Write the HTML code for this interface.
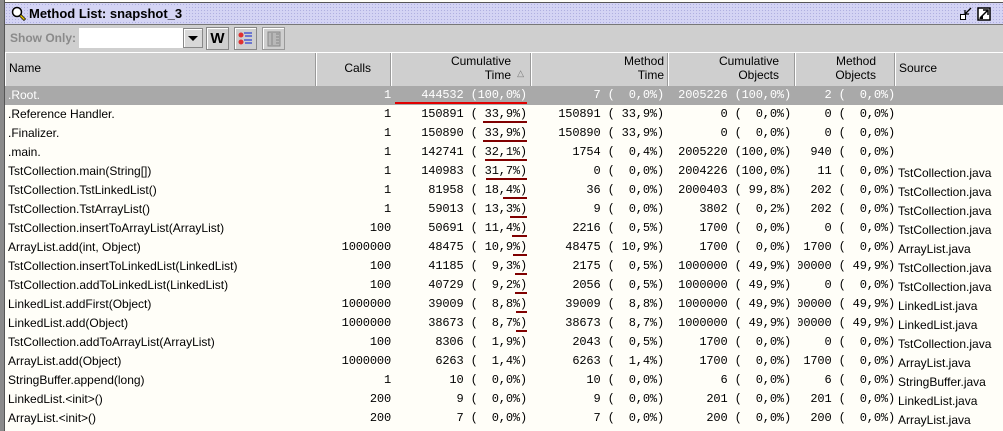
<!DOCTYPE html>
<html><head><meta charset="utf-8"><style>
*{margin:0;padding:0;box-sizing:border-box}
body{width:1003px;height:431px;overflow:hidden;background:#fffef8;font-family:"Liberation Sans",sans-serif;font-size:12px;position:relative}
.lb{position:absolute;left:0;top:0;width:5px;height:431px;background:#8a8a8a;border-right:1px solid #555}
.title{position:absolute;left:5px;top:2px;width:998px;height:23px;background-color:#d4d4f4;background-image:radial-gradient(#b0b0e0 0.6px,transparent 0.8px);background-size:3px 3px;border-top:1px solid #555;border-bottom:1px solid #777}
.title b{position:absolute;left:24px;top:3px;font-size:13px;background:#d4d4f4;padding-right:4px;color:#000}
.tb{position:absolute;left:5px;top:25px;width:998px;height:27px;background:#cfcfcf}
.hdr{position:absolute;left:5px;top:52px;width:998px;height:34px;background:#cfcfcf;border-top:1px solid #fff}
.hc{position:absolute;top:0;height:33px;border-right:1px solid #9a9a9a;border-left:1px solid #fff;font-size:12px;color:#000;line-height:14px}
.row{position:absolute;left:5px;width:998px;height:19px}
.row.sel{background:#a9a9a9;color:#fff}
.nm{position:absolute;left:3px;top:2px;white-space:nowrap}
.m{position:absolute;top:2px;font-family:"Liberation Mono",monospace;font-size:12px;letter-spacing:-0.15px;white-space:pre;text-align:right}
.ul{position:absolute;height:2px;background:#800000;top:16px}
.clip{position:absolute;left:793px;width:97px;height:19px;overflow:hidden}
</style></head><body>
<div class="lb"></div>
<div class="title">
<svg style="position:absolute;left:6px;top:3px" width="16" height="16" viewBox="0 0 16 16"><circle cx="6" cy="6" r="4.5" fill="#fff" stroke="#000" stroke-width="1.5"/><path d="M9 9l5 5" stroke="#000" stroke-width="3"/><path d="M9.5 9.5l4 4" stroke="#e8c800" stroke-width="1.5"/></svg>
<b>Method List: snapshot_3</b>
<svg style="position:absolute;left:954px;top:3px" width="40" height="16" viewBox="0 0 40 16"><rect x="1.5" y="8.5" width="5" height="5" fill="#fff" stroke="#000"/><path d="M6 8l6-6M6 4v4h4" stroke="#000" fill="none" stroke-width="1.3"/><rect x="19" y="2" width="12" height="12" fill="#fff" stroke="#000" stroke-width="1.5"/><path d="M21 12l8-8M24 4h5v5" stroke="#000" fill="none" stroke-width="1.5"/><path d="M20 13l4 0 0-4z" fill="#000"/></svg>
</div>
<div class="tb">
<span style="position:absolute;left:5px;top:6px;font-weight:bold;color:#8a8a8a;font-size:12px">Show Only:</span>
<div style="position:absolute;left:74px;top:3px;width:109px;height:20px;background:#fff"></div>
<div style="position:absolute;left:178px;top:3px;width:20px;height:20px;border:1px solid #888;background:#d8d8d8;box-shadow:inset 1px 1px #fff"><svg width="18" height="18"><path d="M4 7h10l-5 5z" fill="#000"/></svg></div>
<div style="position:absolute;left:201px;top:2px;width:23px;height:23px;border:1px solid #888;box-shadow:inset 1px 1px #fff;font-weight:bold;font-size:15px;text-align:center;line-height:21px">W</div>
<div style="position:absolute;left:229px;top:2px;width:23px;height:23px;border:1px solid #888;box-shadow:inset 1px 1px #fff"><svg width="22" height="22"><circle cx="6" cy="7" r="2.5" fill="#e03030"/><circle cx="6" cy="14" r="2.5" fill="#e03030"/><path d="M9 5h8M10 8h7M9 12h8M10 15h7" stroke="#3040d0" stroke-width="1.2"/></svg></div>
<div style="position:absolute;left:257px;top:2px;width:23px;height:23px;border:1px solid #999;box-shadow:inset 1px 1px #fff"><svg width="22" height="22"><rect x="5" y="4" width="12" height="14" fill="#b8b8b8" stroke="#888"/><path d="M9 5v12M13 6h3M13 9h3M13 12h3M13 15h3" stroke="#888"/></svg></div>
</div>
<div class="hdr">
<div class="hc" style="left:0;width:311px"><span style="position:absolute;left:3px;top:8px">Name</span></div>
<div class="hc" style="left:311px;width:75px"><span style="position:absolute;right:19px;top:8px">Calls</span></div>
<div class="hc" style="left:386px;width:140px;text-align:right;padding:1px 19px 0 0">Cumulative<br>Time<span style="position:absolute;right:6px;top:13px;font-size:9px;color:#777">△</span></div>
<div class="hc" style="left:526px;width:137px;text-align:right;padding:1px 3px 0 0">Method<br>Time</div>
<div class="hc" style="left:663px;width:127px;text-align:right;padding:1px 15px 0 0">Cumulative<br>Objects</div>
<div class="hc" style="left:790px;width:100px;text-align:right;padding:1px 18px 0 0">Method<br>Objects</div>
<div class="hc" style="left:890px;width:108px;border-right:none"><span style="position:absolute;left:3px;top:8px">Source</span></div>
</div>
<div class="row sel" style="top:86px"><span class="nm">.Root.</span><span class="m" style="right:612px">1</span><div class="ul" style="left:390px;width:132px;background:#e00000"></div><span class="m" style="right:476px">444532 (100,0%)</span><span class="m" style="right:339px">7 (  0,0%)</span><span class="m" style="right:212px">2005226 (100,0%)</span><div class="clip" style="top:0"><span class="m" style="right:0">2 (  0,0%)</span></div></div>
<div class="row" style="top:105px"><span class="nm">.Reference Handler.</span><span class="m" style="right:612px">1</span><div class="ul" style="left:478px;width:44px"></div><span class="m" style="right:476px">150891 ( 33,9%)</span><span class="m" style="right:339px">150891 ( 33,9%)</span><span class="m" style="right:212px">0 (  0,0%)</span><div class="clip"><span class="m" style="right:0">0 (  0,0%)</span></div></div>
<div class="row" style="top:124px"><span class="nm">.Finalizer.</span><span class="m" style="right:612px">1</span><div class="ul" style="left:478px;width:44px"></div><span class="m" style="right:476px">150890 ( 33,9%)</span><span class="m" style="right:339px">150890 ( 33,9%)</span><span class="m" style="right:212px">0 (  0,0%)</span><div class="clip"><span class="m" style="right:0">0 (  0,0%)</span></div></div>
<div class="row" style="top:143px"><span class="nm">.main.</span><span class="m" style="right:612px">1</span><div class="ul" style="left:480px;width:42px"></div><span class="m" style="right:476px">142741 ( 32,1%)</span><span class="m" style="right:339px">1754 (  0,4%)</span><span class="m" style="right:212px">2005220 (100,0%)</span><div class="clip"><span class="m" style="right:0">940 (  0,0%)</span></div></div>
<div class="row" style="top:162px"><span class="nm">TstCollection.main(String[])</span><span class="m" style="right:612px">1</span><div class="ul" style="left:481px;width:41px"></div><span class="m" style="right:476px">140983 ( 31,7%)</span><span class="m" style="right:339px">0 (  0,0%)</span><span class="m" style="right:212px">2004226 (100,0%)</span><div class="clip"><span class="m" style="right:0">11 (  0,0%)</span></div></div>
<div class="row" style="top:181px"><span class="nm">TstCollection.TstLinkedList()</span><span class="m" style="right:612px">1</span><div class="ul" style="left:498px;width:24px"></div><span class="m" style="right:476px">81958 ( 18,4%)</span><span class="m" style="right:339px">36 (  0,0%)</span><span class="m" style="right:212px">2000403 ( 99,8%)</span><div class="clip"><span class="m" style="right:0">202 (  0,0%)</span></div></div>
<div class="row" style="top:200px"><span class="nm">TstCollection.TstArrayList()</span><span class="m" style="right:612px">1</span><div class="ul" style="left:505px;width:17px"></div><span class="m" style="right:476px">59013 ( 13,3%)</span><span class="m" style="right:339px">9 (  0,0%)</span><span class="m" style="right:212px">3802 (  0,2%)</span><div class="clip"><span class="m" style="right:0">202 (  0,0%)</span></div></div>
<div class="row" style="top:219px"><span class="nm">TstCollection.insertToArrayList(ArrayList)</span><span class="m" style="right:612px">100</span><div class="ul" style="left:507px;width:15px"></div><span class="m" style="right:476px">50691 ( 11,4%)</span><span class="m" style="right:339px">2216 (  0,5%)</span><span class="m" style="right:212px">1700 (  0,0%)</span><div class="clip"><span class="m" style="right:0">0 (  0,0%)</span></div></div>
<div class="row" style="top:238px"><span class="nm">ArrayList.add(int, Object)</span><span class="m" style="right:612px">1000000</span><div class="ul" style="left:508px;width:14px"></div><span class="m" style="right:476px">48475 ( 10,9%)</span><span class="m" style="right:339px">48475 ( 10,9%)</span><span class="m" style="right:212px">1700 (  0,0%)</span><div class="clip"><span class="m" style="right:0">1700 (  0,0%)</span></div></div>
<div class="row" style="top:257px"><span class="nm">TstCollection.insertToLinkedList(LinkedList)</span><span class="m" style="right:612px">100</span><div class="ul" style="left:510px;width:12px"></div><span class="m" style="right:476px">41185 (  9,3%)</span><span class="m" style="right:339px">2175 (  0,5%)</span><span class="m" style="right:212px">1000000 ( 49,9%)</span><div class="clip"><span class="m" style="right:0">1000000 ( 49,9%)</span></div></div>
<div class="row" style="top:276px"><span class="nm">TstCollection.addToLinkedList(LinkedList)</span><span class="m" style="right:612px">100</span><div class="ul" style="left:510px;width:12px"></div><span class="m" style="right:476px">40729 (  9,2%)</span><span class="m" style="right:339px">2056 (  0,5%)</span><span class="m" style="right:212px">1000000 ( 49,9%)</span><div class="clip"><span class="m" style="right:0">0 (  0,0%)</span></div></div>
<div class="row" style="top:295px"><span class="nm">LinkedList.addFirst(Object)</span><span class="m" style="right:612px">1000000</span><div class="ul" style="left:511px;width:11px"></div><span class="m" style="right:476px">39009 (  8,8%)</span><span class="m" style="right:339px">39009 (  8,8%)</span><span class="m" style="right:212px">1000000 ( 49,9%)</span><div class="clip"><span class="m" style="right:0">1000000 ( 49,9%)</span></div></div>
<div class="row" style="top:314px"><span class="nm">LinkedList.add(Object)</span><span class="m" style="right:612px">1000000</span><div class="ul" style="left:511px;width:11px"></div><span class="m" style="right:476px">38673 (  8,7%)</span><span class="m" style="right:339px">38673 (  8,7%)</span><span class="m" style="right:212px">1000000 ( 49,9%)</span><div class="clip"><span class="m" style="right:0">1000000 ( 49,9%)</span></div></div>
<div class="row" style="top:333px"><span class="nm">TstCollection.addToArrayList(ArrayList)</span><span class="m" style="right:612px">100</span><span class="m" style="right:476px">8306 (  1,9%)</span><span class="m" style="right:339px">2043 (  0,5%)</span><span class="m" style="right:212px">1700 (  0,0%)</span><div class="clip"><span class="m" style="right:0">0 (  0,0%)</span></div></div>
<div class="row" style="top:352px"><span class="nm">ArrayList.add(Object)</span><span class="m" style="right:612px">1000000</span><span class="m" style="right:476px">6263 (  1,4%)</span><span class="m" style="right:339px">6263 (  1,4%)</span><span class="m" style="right:212px">1700 (  0,0%)</span><div class="clip"><span class="m" style="right:0">1700 (  0,0%)</span></div></div>
<div class="row" style="top:371px"><span class="nm">StringBuffer.append(long)</span><span class="m" style="right:612px">1</span><span class="m" style="right:476px">10 (  0,0%)</span><span class="m" style="right:339px">10 (  0,0%)</span><span class="m" style="right:212px">6 (  0,0%)</span><div class="clip"><span class="m" style="right:0">6 (  0,0%)</span></div></div>
<div class="row" style="top:390px"><span class="nm">LinkedList.&lt;init&gt;()</span><span class="m" style="right:612px">200</span><span class="m" style="right:476px">9 (  0,0%)</span><span class="m" style="right:339px">9 (  0,0%)</span><span class="m" style="right:212px">201 (  0,0%)</span><div class="clip"><span class="m" style="right:0">201 (  0,0%)</span></div></div>
<div class="row" style="top:409px"><span class="nm">ArrayList.&lt;init&gt;()</span><span class="m" style="right:612px">200</span><span class="m" style="right:476px">7 (  0,0%)</span><span class="m" style="right:339px">7 (  0,0%)</span><span class="m" style="right:212px">200 (  0,0%)</span><div class="clip"><span class="m" style="right:0">200 (  0,0%)</span></div></div>
<div style="position:absolute;left:898px;top:164px;line-height:19px;font-size:12px;white-space:pre">TstCollection.java
TstCollection.java
TstCollection.java
TstCollection.java
ArrayList.java
TstCollection.java
TstCollection.java
LinkedList.java
LinkedList.java
TstCollection.java
ArrayList.java
StringBuffer.java
LinkedList.java
ArrayList.java</div>
</body></html>
